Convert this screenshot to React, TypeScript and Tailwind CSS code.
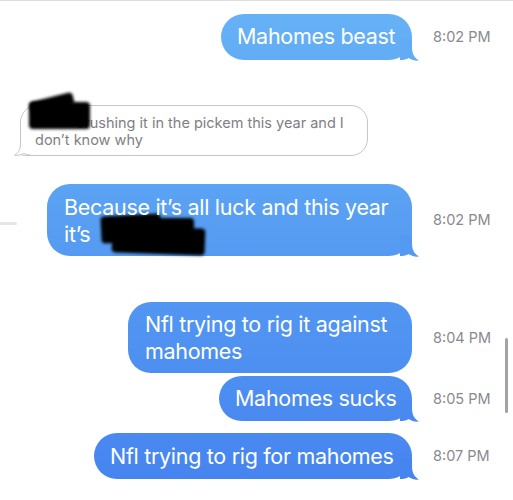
import React from 'react';

const font = { fontFamily: 'Inter, "Noto Sans", sans-serif' };

function SentTail({ color }: { color: string }) {
  return (
    <svg className="absolute right-[-8px] bottom-[-1px]" width="20" height="22" viewBox="0 0 20 22">
      <path d="M0,0 H12 V8 C12,15 14.5,19 19,21.5 C15.5,22 11.5,21 8.5,19 C6.5,20.5 4,21 0,21 Z" fill={color} />
    </svg>
  );
}

type SentProps = {
  bubble: string;
  tailColor?: string;
  time: string;
  children: React.ReactNode;
};

function Sent({ bubble, tailColor, time, children }: SentProps) {
  return (
    <div className="flex items-center justify-end pr-[22px]">
      <div className={`relative ${bubble}`}>
        <div className="relative z-10 text-[21.5px] leading-[27px] tracking-[-0.3px] text-white whitespace-nowrap">{children}</div>
        {tailColor && <SentTail color={tailColor} />}
      </div>
      <div className="ml-[21px] w-[58px] text-[14.5px] text-[#8a8a8e] whitespace-nowrap">{time}</div>
    </div>
  );
}

export default function App() {
  return (
    <div className="relative h-[500px] w-[513px] overflow-hidden bg-white border-t border-[#dedede]" style={font}>
      <div className="flex flex-col pt-[13px]">
        <Sent
          bubble="w-[191px] h-[46px] pl-[16px] pt-[9px] rounded-[23px] bg-linear-to-b from-[#66b1f6] to-[#62acf5]"
          tailColor="#62acf5"
          time="8:02 PM"
        >
          Mahomes beast
        </Sent>

        <div className="mt-[45px] pl-[20px]">
          <div className="relative w-[348px] h-[51px] rounded-[17px] rounded-bl-[4px] border border-[#c6c6c8] bg-white pl-[14px] pt-[8px]">
            <p className="text-[14.5px] leading-[17px] text-[#7f7f83] whitespace-nowrap">
              <span className="inline-block w-[41px]" />
              crushing it in the pickem this year and I
              <br />
              don’t know why
            </p>
            <svg className="absolute left-[-7px] bottom-[-1px]" width="17" height="18" viewBox="0 0 17 18">
              <path d="M6.5,0 V6 C6.5,12 4,15.5 0.5,17.3 C4.5,17.6 8,16.8 10,15.3 C12,16.5 14,17 17,17 V0 Z" fill="#ffffff" />
              <path d="M6.5,0 V6 C6.5,12 4,15.5 0.5,17.3 C4.5,17.6 8,16.8 10,15.3 C12,16.5 14,17 17,17" fill="none" stroke="#c6c6c8" strokeWidth="1" />
            </svg>
            {/* redaction */}
            <div className="absolute left-[9px] top-[-9px] w-[44px] h-[13px] bg-black blur-[1.5px] -rotate-[14deg] rounded-sm" />
            <div className="absolute left-[8px] top-[-4px] w-[61px] h-[27px] bg-black blur-[1.5px] rounded-sm" />
          </div>
        </div>

        <div className="mt-[28px] flex items-center">
          <div className="mt-[7px] h-[3px] w-[17px] rounded-r-full bg-[#e6e6ea]" />
          <div className="flex-1">
            <Sent
              bubble="w-[365px] h-[72px] pl-[17px] pt-[10px] rounded-[23px] bg-linear-to-b from-[#5ba3f3] to-[#559af2]"
              tailColor="#559af2"
              time="8:02 PM"
            >
              Because it’s all luck and this year
              <br />
              it’s <span className="inline-block w-[90px]" />
            </Sent>
          </div>
        </div>
        {/* redaction over bubble 3 */}
        <div className="relative h-0">
          <div className="absolute left-[101px] top-[-41px] w-[60px] h-[27px] bg-black blur-[1.5px] -rotate-[3deg] rounded-sm" />
          <div className="absolute left-[112px] top-[-29px] w-[93px] h-[27px] bg-black blur-[1.5px] rotate-[2deg] rounded-sm" />
          <div className="absolute left-[150px] top-[-38px] w-[44px] h-[14px] bg-black blur-[1.5px] rounded-sm" />
        </div>

        <div className="mt-[46px] flex flex-col">
          <Sent
            bubble="w-[284px] h-[71px] pl-[17px] pt-[9px] rounded-[23px] bg-linear-to-b from-[#5296f2] to-[#4d8ff1]"
            time="8:04 PM"
          >
            Nfl trying to rig it against
            <br />
            mahomes
          </Sent>
          <div className="mt-[3px]">
            <Sent
              bubble="w-[193px] h-[45px] pl-[16px] pt-[9px] rounded-[23px] bg-linear-to-b from-[#4d8ff1] to-[#4a8af0]"
              tailColor="#4a8af0"
              time="8:05 PM"
            >
              Mahomes sucks
            </Sent>
          </div>
          <div className="mt-[12px]">
            <Sent
              bubble="w-[318px] h-[46px] pl-[16px] pt-[10px] rounded-[23px] bg-linear-to-b from-[#4989f0] to-[#4685ef]"
              tailColor="#4685ef"
              time="8:07 PM"
            >
              Nfl trying to rig for mahomes
            </Sent>
          </div>
        </div>
      </div>

      <div className="absolute right-[5px] top-[337px] h-[75px] w-[3px] rounded-full bg-[#a3a3a6]" />
    </div>
  );
}
